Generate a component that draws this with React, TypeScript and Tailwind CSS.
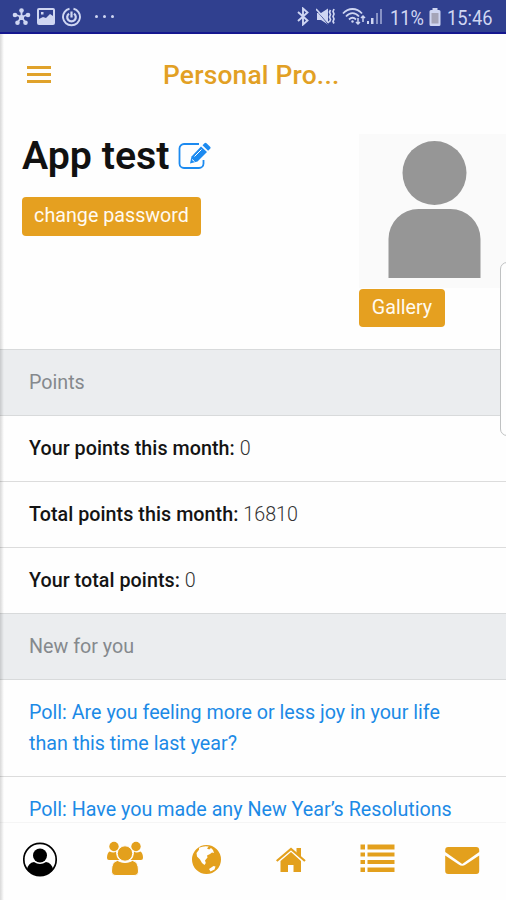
import type { ReactNode } from "react";

function StatusBar() {
  return (
    <header className="flex h-[34px] shrink-0 items-center justify-between border-b-2 border-[#15178f] bg-[#30408f] pl-3 pr-[13px] pt-px text-[#cfd6f2]">
      <div className="flex items-center">
        <svg width="19" height="20" viewBox="0 0 19 20" fill="currentColor" stroke="currentColor">
          <path d="M9.500 10V3.500M9.500 10L3 7.500M9.500 10L16 7.500M9.500 10L5.500 15.500M9.500 10L13.500 15.500" strokeWidth="1.800" />
          <g stroke="none">
            <circle cx="9.500" cy="3.500" r="2.300" />
            <circle cx="3" cy="8" r="2.300" />
            <circle cx="16" cy="8" r="2.300" />
            <circle cx="5.500" cy="15.800" r="2.300" />
            <circle cx="13.500" cy="15.800" r="2.300" />
            <circle cx="9.500" cy="10.500" r="2.600" />
          </g>
        </svg>
        <svg className="ml-1.5" width="18" height="17" viewBox="0 0 18 17">
          <path fill="currentColor" fillRule="evenodd" d="M2 0h14a2 2 0 0 1 2 2v13a2 2 0 0 1-2 2H2a2 2 0 0 1-2-2V2a2 2 0 0 1 2-2zM2 2v9l4-2 3 1 4-4 3 2V2zM4 4h2.500v2.500H4z" />
        </svg>
        <svg className="ml-[7px]" width="19" height="20" viewBox="0 0 19 20" fill="none" stroke="currentColor">
          <path d="M7.500 1.800A8.300 8.300 0 0 0 9.500 18.200A8.300 8.300 0 0 0 11.500 1.800" strokeWidth="1.900" />
          <path d="M7 6.600a4.300 4.300 0 1 0 5 0M9.500 4.500v6" strokeWidth="2.200" />
        </svg>
        <div className="ml-[14px] flex gap-[5px]">
          <i className="size-[3px] rounded-full bg-current" />
          <i className="size-[3px] rounded-full bg-current" />
          <i className="size-[3px] rounded-full bg-current" />
        </div>
      </div>
      <div className="flex items-center">
        <svg width="12" height="19" viewBox="0 0 12 19" fill="none" stroke="currentColor" strokeWidth="1.900">
          <path d="M1 5l9.500 8.500L6 17.500v-16l4.500 4L1 14" />
        </svg>
        <svg className="ml-[7px]" width="20" height="19" viewBox="0 0 20 19" fill="currentColor">
          <path d="M1 6h4l7-4.500v16L5 13H1z" />
          <path d="M1 4l11 13" stroke="#30408f" strokeWidth="1" />
          <path d="M0 2l13 14M14.500 3l-1 2 1 2.500-1 2.500 1 2.500-1 2.500M18 2l-1 2.500 1 2.500-1 2.500 1 2.500-1 2.500 1 2" fill="none" stroke="currentColor" strokeWidth="1.700" />
        </svg>
        <svg className="ml-[6px]" width="24" height="19" viewBox="0 0 24 19" fill="none" stroke="currentColor" strokeWidth="1.800">
          <path d="M1 6.500C6.500 .5 14.500.5 20 6.500M4 9.500c4-4.500 9-4.500 13 0M7 12.500c2.500-2.500 4.500-2.500 7 0" />
          <circle cx="10.500" cy="14.500" r="1.200" fill="currentColor" stroke="none" />
          <path d="M16 11v6m-2-2 2 2 2-2M21 15V9m-2 2 2-2 2 2" strokeWidth="1.500" />
        </svg>
        <svg className="ml-px" width="16" height="17" viewBox="0 0 16 17" fill="currentColor">
          <path d="M0 13h2v3H0zM4 10h2.500v6H4z" />
          <path d="M9 5h2v11H9zM13 1h2v15h-2z" opacity=".55" />
        </svg>
        <span className="ml-[7px] mt-[3px] inline-block w-[34px] origin-left scale-x-[0.87] whitespace-nowrap text-[21px] leading-8">11%</span>
        <svg className="ml-[5px]" width="12" height="18" viewBox="0 0 12 18">
          <path d="M3.500 0h5v2H10a1.500 1.500 0 0 1 1.500 1.500v13A1.500 1.500 0 0 1 10 18H2A1.500 1.500 0 0 1 .5 16.500v-13A1.500 1.500 0 0 1 2 2h1.500z" fill="currentColor" />
          <path d="M2.500 5h7v10.500h-7z" fill="#a5a5b8" />
        </svg>
        <span className="ml-[6px] mt-[3px] inline-block w-[46px] origin-left scale-x-[0.87] whitespace-nowrap text-[21px] leading-8">15:46</span>
      </div>
    </header>
  );
}

function TitleBar() {
  return (
    <div className="flex h-[84px] shrink-0 items-center pl-[27px]">
      <button aria-label="Menu" className="-mt-[3px] flex w-6 flex-col gap-[4px]">
        <i className="h-[3px] bg-[#e0a22b]" />
        <i className="h-[3px] bg-[#e0a22b]" />
        <i className="h-[3px] bg-[#e0a22b]" />
      </button>
      <h1 className="ml-[112px] whitespace-nowrap text-[26.4px] font-medium tracking-[0.18px] text-[#e2a024]">Personal Pro...</h1>
    </div>
  );
}

function Profile() {
  return (
    <section className="flex h-[231px] shrink-0 justify-between pl-[22px]">
      <div className="pt-[11px]">
        <div className="flex items-center">
          <h2 className="whitespace-nowrap text-[39.3px] font-semibold leading-[54px] text-[#111]">App test</h2>
          <svg className="ml-[9px]" width="33" height="28" viewBox="0 0 33 28" fill="none" stroke="#1c8af0" strokeWidth="1.800">
            <path d="M21 2H6A4.500 4.500 0 0 0 1.500 6.500v15A4.500 4.500 0 0 0 6 26h15a4.500 4.500 0 0 0 4.500-4.500V18" />
            <path d="M12 21.500l1.500-7L23 4.500l6 5.500-9.500 9.500z" fill="#1c8af0" stroke="none" />
            <path d="M24.500 3.200l2-2q1-1 2 0l3.600 3.500q1 1 0 2l-2 2z" fill="#1c8af0" stroke="none" />
            <path d="M16.500 14.500l7-7M14 17.500l2.500 2" stroke="#fff" strokeWidth="1" />
          </svg>
        </div>
        <button className="mt-[14px] h-[39px] w-[179px] whitespace-nowrap rounded bg-[#e5a020] pb-0.5 text-[19.7px] text-[#fffaf0]">change password</button>
      </div>
      <div className="w-[147px] pt-4">
        <div className="h-[154px] bg-[#fafafa]">
          <svg width="147" height="154" viewBox="0 0 147 154" fill="#969696">
            <circle cx="75.500" cy="39" r="32" />
            <path d="M29.500 144v-39a30 30 0 0 1 30-30h32a30 30 0 0 1 30 30v39z" />
          </svg>
        </div>
        <button className="mt-px block h-[38px] w-[86px] rounded bg-[#e5a020] text-[19.7px] text-[#fffaf0]">Gallery</button>
      </div>
    </section>
  );
}

function Divider({ children }: { children: ReactNode }) {
  return <div className="flex h-[67px] shrink-0 items-center border-y border-[#d8dadb] bg-[#ebedef] pl-[29px] text-[#85898d]">{children}</div>;
}

function PointRow({ label, value, last = false }: { label: string; value: string; last?: boolean }) {
  return (
    <div className={last ? "flex h-[65px] shrink-0 items-center pl-[29px] text-[#333]" : "flex h-[66px] shrink-0 items-center border-b border-[#dcdcdc] pl-[29px] text-[#333]"}>
      <span className="whitespace-pre"><b className="font-medium tracking-[0.05px] text-[#141414]">{label}</b> <span className="font-light">{value}</span></span>
    </div>
  );
}

const GOLD = "#e3a01d";

function TabBar() {
  return (
    <nav className="flex h-[78px] shrink-0 gap-[48.4px] border-t border-[#f5f5f5] bg-[#fefefe] pl-[22px] pt-[18px]">
      <svg className="shrink-0" width="36" height="36" viewBox="0 0 36 36">
        <circle cx="18" cy="18.500" r="16.200" fill="#fff" stroke="#000" strokeWidth="1.700" />
        <circle cx="18" cy="14.500" r="7" />
        <path d="M5 28.500q1-6.500 7-7.500 6 4 12 0 6 1 7 7.500Q26 34.500 18 34.500T5 28.500z" />
      </svg>
      <svg className="shrink-0" width="36" height="36" viewBox="-1 0 36 36" fill={GOLD} overflow="visible">
        <circle cx="7" cy="5.500" r="4.700" />
        <circle cx="29" cy="5.500" r="4.700" />
        <path d="M2.500 10.500q4.500 2 6.500 0 0 6 3.500 8.500H2q-2 0-2-2 0-5 2.500-6.500zM33.500 10.500q-4.500 2-6.500 0 0 6-3.500 8.500H34q2 0 2-2 0-5-2.500-6.500z" />
        <g stroke="#fefefe" strokeWidth="1">
          <path d="M10.500 19.500q7.500 4 15 0 6 1 6 10.500 0 4.500-4.500 4.500H9Q4.500 34.500 4.500 30q0-9.500 6-10.500z" />
          <circle cx="18" cy="12.500" r="7.700" />
        </g>
      </svg>
      <svg className="shrink-0" width="36" height="36" viewBox="-.5 0 36 36">
        <path d="M7 9.500L5 12l.5 3.500 3 3 2 3.500 2.500 2 .8-2-.8-2.500 2.500-3-.5-2 3-1.500 2-1.500 2 .5-1.500-3-2-2-1.500 1.500-2-1 1.500-2q-5-1-9.500 2zM17.500 27.500l4.500-3 2 .5-1 3-4 2z" fill="none" />
        <path fillRule="evenodd" fill={GOLD} d="M15 4a14.500 14.500 0 1 0 0 29 14.500 14.500 0 1 0 0-29zM7.500 8.800L5 12l.5 3.500 3 3 2 3.500 2.500 2 1.300-2-.8-2.500 2.500-3-.5-2 3-1.500 2-1.500 2 .5-1-3-2-2-1.800 1.500-2.200-1 1.700-2q-5-1-9.700 1.300zM17.500 28l4.500-3 2 .5-1 3-4 2z" />
      </svg>
      <svg className="shrink-0" width="36" height="36" viewBox="-.5 0 36 36" fill={GOLD}>
        <path d="M15.500 11L5 20v11h7.500v-7H18v7h7.500V20z" />
        <path d="M1.200 20L15.500 8l14 12" fill="none" stroke={GOLD} strokeWidth="2.200" />
        <path d="M21 7h4.500v10L21 13z" />
      </svg>
      <svg className="shrink-0" width="36" height="36" viewBox="-.5 0 36 36" fill={GOLD}>
        <path d="M0 3.500h4.500v5H0zM7 3.500h27v5H7zM0 11.500h4.500v4H0zM7 11.500h27v4H7zM0 19h4.500v4H0zM7 19h27v4H7zM0 26.500h4.500v4.500H0zM7 26.500h27v4.500H7z" />
      </svg>
      <svg className="shrink-0" width="36" height="36" viewBox="-.7 0 36 36" fill={GOLD}>
        <path d="M.5 11V9q0-3 3-3h28q3 0 3 3v2L17.500 23z" />
        <path d="M.5 14.500L14 23.500q3.500 2.500 7 0l13.500-9V30q0 3-3 3h-28q-3 0-3-3z" />
      </svg>
    </nav>
  );
}

export default function App() {
  return (
    <div className="relative flex h-[900px] w-[506px] flex-col overflow-hidden bg-[#fefefe] font-[Roboto,sans-serif]">
      <StatusBar />
      <TitleBar />
      <Profile />
      <main className="flex h-[473px] shrink-0 flex-col overflow-hidden text-[19.7px]">
        <Divider>Points</Divider>
        <PointRow label="Your points this month:" value="0" />
        <PointRow label="Total points this month:" value="16810" />
        <PointRow label="Your total points:" value="0" last />
        <Divider>New for you</Divider>
        <a className="h-[97px] shrink-0 border-b border-[#dcdcdc] pl-[29px] pt-[17px] leading-[31px] text-[#1c8ae6]">
          Poll: Are you feeling more or less joy in your life<br />than this time last year?
        </a>
        <a className="shrink-0 whitespace-nowrap pl-[29px] pt-[17px] leading-[31px] text-[#1c8ae6]">Poll: Have you made any New Year’s Resolutions</a>
      </main>
      <TabBar />
      <div className="absolute bottom-0 left-0 top-[34px] w-1 bg-linear-to-r from-black/15 to-transparent" />
      <div className="absolute -right-2 top-[262px] h-[174px] w-[14px] rounded-[7px] border border-[#bfc1c2] bg-[#fefefe]" />
    </div>
  );
}
